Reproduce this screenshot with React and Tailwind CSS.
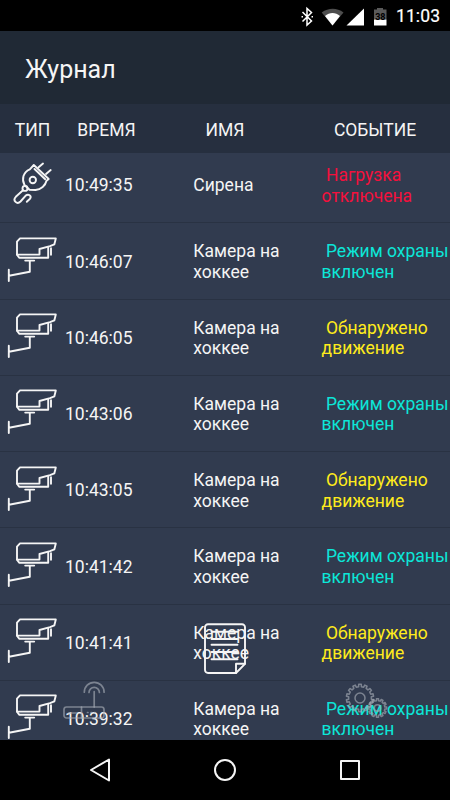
import React from 'react';

const events = [
  { type: 'plug', time: '10:49:35', name: 'Сирена', text: 'Нагрузка отключена', color: 'text-[#f5103c]' },
  { type: 'camera', time: '10:46:07', name: 'Камера на хоккее', text: 'Режим охраны включен', color: 'text-[#0ce6d8]' },
  { type: 'camera', time: '10:46:05', name: 'Камера на хоккее', text: 'Обнаружено движение', color: 'text-[#ffeb1c]' },
  { type: 'camera', time: '10:43:06', name: 'Камера на хоккее', text: 'Режим охраны включен', color: 'text-[#0ce6d8]' },
  { type: 'camera', time: '10:43:05', name: 'Камера на хоккее', text: 'Обнаружено движение', color: 'text-[#ffeb1c]' },
  { type: 'camera', time: '10:41:42', name: 'Камера на хоккее', text: 'Режим охраны включен', color: 'text-[#0ce6d8]' },
  { type: 'camera', time: '10:41:41', name: 'Камера на хоккее', text: 'Обнаружено движение', color: 'text-[#ffeb1c]' },
  { type: 'camera', time: '10:39:32', name: 'Камера на хоккее', text: 'Режим охраны включен', color: 'text-[#0ce6d8]' }
];

const stroke = {
  fill: 'none',
  stroke: 'currentColor',
  strokeLinecap: 'round',
  strokeLinejoin: 'round'
};

const CameraIcon = () => (
  <svg width="65" height="76" viewBox="0 0 65 76" {...stroke} strokeWidth="1.9">
    <path d="M20 14.400H55.800L54.300 20.400 50 22.200 39.500 25V30.600H17V17.600z" />
    <path d="M17 30.600L19.200 33.700H48.200V23.200M51 24.200V30.800" />
    <path d="M25.200 36.600H34.200M29.800 36.800V47.800L9 51.700M8.800 45.800V57" />
  </svg>
);

const PlugIcon = () => (
  <svg width="65" height="76" viewBox="0 0 65 76" {...stroke} strokeWidth="1.9">
    <path d="M33.800 17L48.700 31 46.500 32.800C45.500 37.500 41 41.300 35.500 42L29.500 41.800 24.500 37C21.500 31.500 23 24 29.800 21.300z" />
    <path d="M34.500 21L45.200 31.200M38.300 19.500L43 15.500M46 26L50.700 22" />
    <circle cx="32.8" cy="32" r="3.2" />
    <circle cx="25" cy="40.4" r="2.5" />
    <path d="M23 42.300L15.800 48.800C12.300 52.500 17 57 20.500 53.500L25.500 47.800C28.500 45.200 32 48 30 50.800L26.800 53.800" />
  </svg>
);

const RouterIcon = () => (
  <svg width="44" height="40" viewBox="0 0 44 40" {...stroke} strokeWidth="1.7">
    <rect x="1" y="26" width="40" height="11" rx="2.5" />
    <path d="M18.500 26v11M5.500 32h8M31.200 26V10.500M24.500 31.500h.5M28 31.500h.5M31.500 31.500h.5" />
    <path d="M21.300 11.200a9.900 9.900 0 0 1 19.800 0M26 11.500a5.200 5.200 0 0 1 10.400 0" />
  </svg>
);

const DocumentIcon = () => (
  <svg width="44" height="53" viewBox="0 0 44 53" {...stroke} strokeWidth="1.9">
    <path d="M5 2.300h34a3 3 0 0 1 3 3v36.500L33 51H5a3 3 0 0 1-3-3V5.300a3 3 0 0 1 3-3z" />
    <path d="M33 51v-9.200h9M8.500 9.700h26M8.500 17h26M8.500 22.700h26M8.500 30h26M8.500 37.200h26" />
  </svg>
);

const gearPath = (cx, cy, outer, inner, teeth) => {
  const step = (Math.PI * 2) / teeth;
  const points = [];
  for (let i = 0; i < teeth; i++) {
    [[-0.27, inner], [-0.21, outer], [0.21, outer], [0.27, inner]].forEach(([shift, r]) => {
      const a = (i + shift) * step - Math.PI / 2;
      points.push(`${(cx + r * Math.cos(a)).toFixed(2)} ${(cy + r * Math.sin(a)).toFixed(2)}`);
    });
  }
  return `M${points.join('L')}Z`;
};

const GearsIcon = () => (
  <svg width="44" height="38" viewBox="0 0 44 38" {...stroke} strokeWidth="1.5">
    <path d={gearPath(15, 15, 13.7, 11.4, 14)} />
    <circle cx="15" cy="15" r="5" />
    <path d={gearPath(32.5, 25, 9.3, 7.4, 12)} />
    <circle cx="32.5" cy="25" r="3.2" />
  </svg>
);

const StatusBar = () => (
  <div className="flex h-[31px] shrink-0 items-center justify-end bg-black pr-[9px] pt-px text-white">
    <svg width="96" height="31" viewBox="0 0 96 31">
      <path d="M3.500 11l9 9-4.500 4V7.500l4.500 4-9 9" fill="none" stroke="currentColor" strokeWidth="1.5" />
      <path d="M2.500 15.700h1.500M12.500 15.700h1.500" stroke="currentColor" strokeWidth="1.5" />
      <path d="M22.700 11.500C29.500 6.500 38 6.500 44.500 11.500L33.500 24.500z" fill="#4d4d4d" />
      <path d="M26 15c4.500-4 10.500-4 15 0L33.500 24.500z" fill="currentColor" />
      <path d="M65 7.500v17H47.500z" fill="currentColor" />
      <path d="M75 8.500h3V7h6v1.500h3.500v10H75z" fill="#5a5a5a" />
      <path d="M75 18.500h12.500v6H75z" fill="currentColor" />
      <text x="81.3" y="18.8" textAnchor="middle" className="text-[9px] font-bold" fill="#000">38</text>
    </svg>
    <span className="w-[46px] pl-px pt-px text-[17.5px] tracking-[0.1px] [-webkit-text-stroke:0.2px]">11:03</span>
  </div>
);

const EventRow = ({ event }) => (
  <li className="flex h-[76.25px] items-center border-b border-[#293243] pt-[2px]">
    <div className="w-[65px] shrink-0">
      {event.type === 'plug' ? <PlugIcon /> : <CameraIcon />}
    </div>
    <div className="w-[128.3px] shrink-0">{event.time}</div>
    <div className="w-[128.3px] shrink-0 pr-6">{event.name}</div>
    <div className={`flex-1 ${event.color}`}>&nbsp;{event.text}</div>
  </li>
);

export default function App() {
  return (
    <div className="flex h-[800px] w-[450px] flex-col overflow-hidden bg-[#313b4f] font-['Roboto',sans-serif] text-[17.5px] leading-[20.5px] text-[#f5f5f5]">
      <StatusBar />
      <header className="flex h-[73px] shrink-0 items-center bg-[#202935] pl-[25px] pt-[5px] text-[25px]">
        Журнал
      </header>
      <div className="flex h-[49px] shrink-0 items-center bg-[#262f3f] pt-[3px]">
        <div className="w-[65px] text-center">ТИП</div>
        <div className="w-[83px] text-center">ВРЕМЯ</div>
        <div className="w-[154px] text-center">ИМЯ</div>
        <div className="w-[146px] text-center">СОБЫТИЕ</div>
      </div>

      <main className="relative h-[587px] shrink-0 overflow-hidden">
        <ul className="-mt-[6px]">
          {events.map(event => (
            <EventRow key={event.time} event={event} />
          ))}
        </ul>
        <nav>
          <div className="absolute left-[63px] top-[528px] text-[#a5aab3]/65"><RouterIcon /></div>
          <div className="absolute left-[203px] top-[469px]"><DocumentIcon /></div>
          <div className="absolute left-[345px] top-[530px] text-[#a5aab3]/65"><GearsIcon /></div>
        </nav>
      </main>

      <footer className="flex h-[60px] shrink-0 items-center justify-between bg-black px-[87px]">
        <svg width="26" height="26" viewBox="0 0 26 26" {...stroke} strokeWidth="2">
          <path d="M22 2.500v21L4 13z" />
        </svg>
        <svg width="26" height="26" viewBox="0 0 26 26" {...stroke} strokeWidth="2">
          <circle cx="13" cy="13" r="10" />
        </svg>
        <svg width="26" height="26" viewBox="0 0 26 26" {...stroke} strokeWidth="2">
          <path d="M4 4h18v18H4z" />
        </svg>
      </footer>
    </div>
  );
}
